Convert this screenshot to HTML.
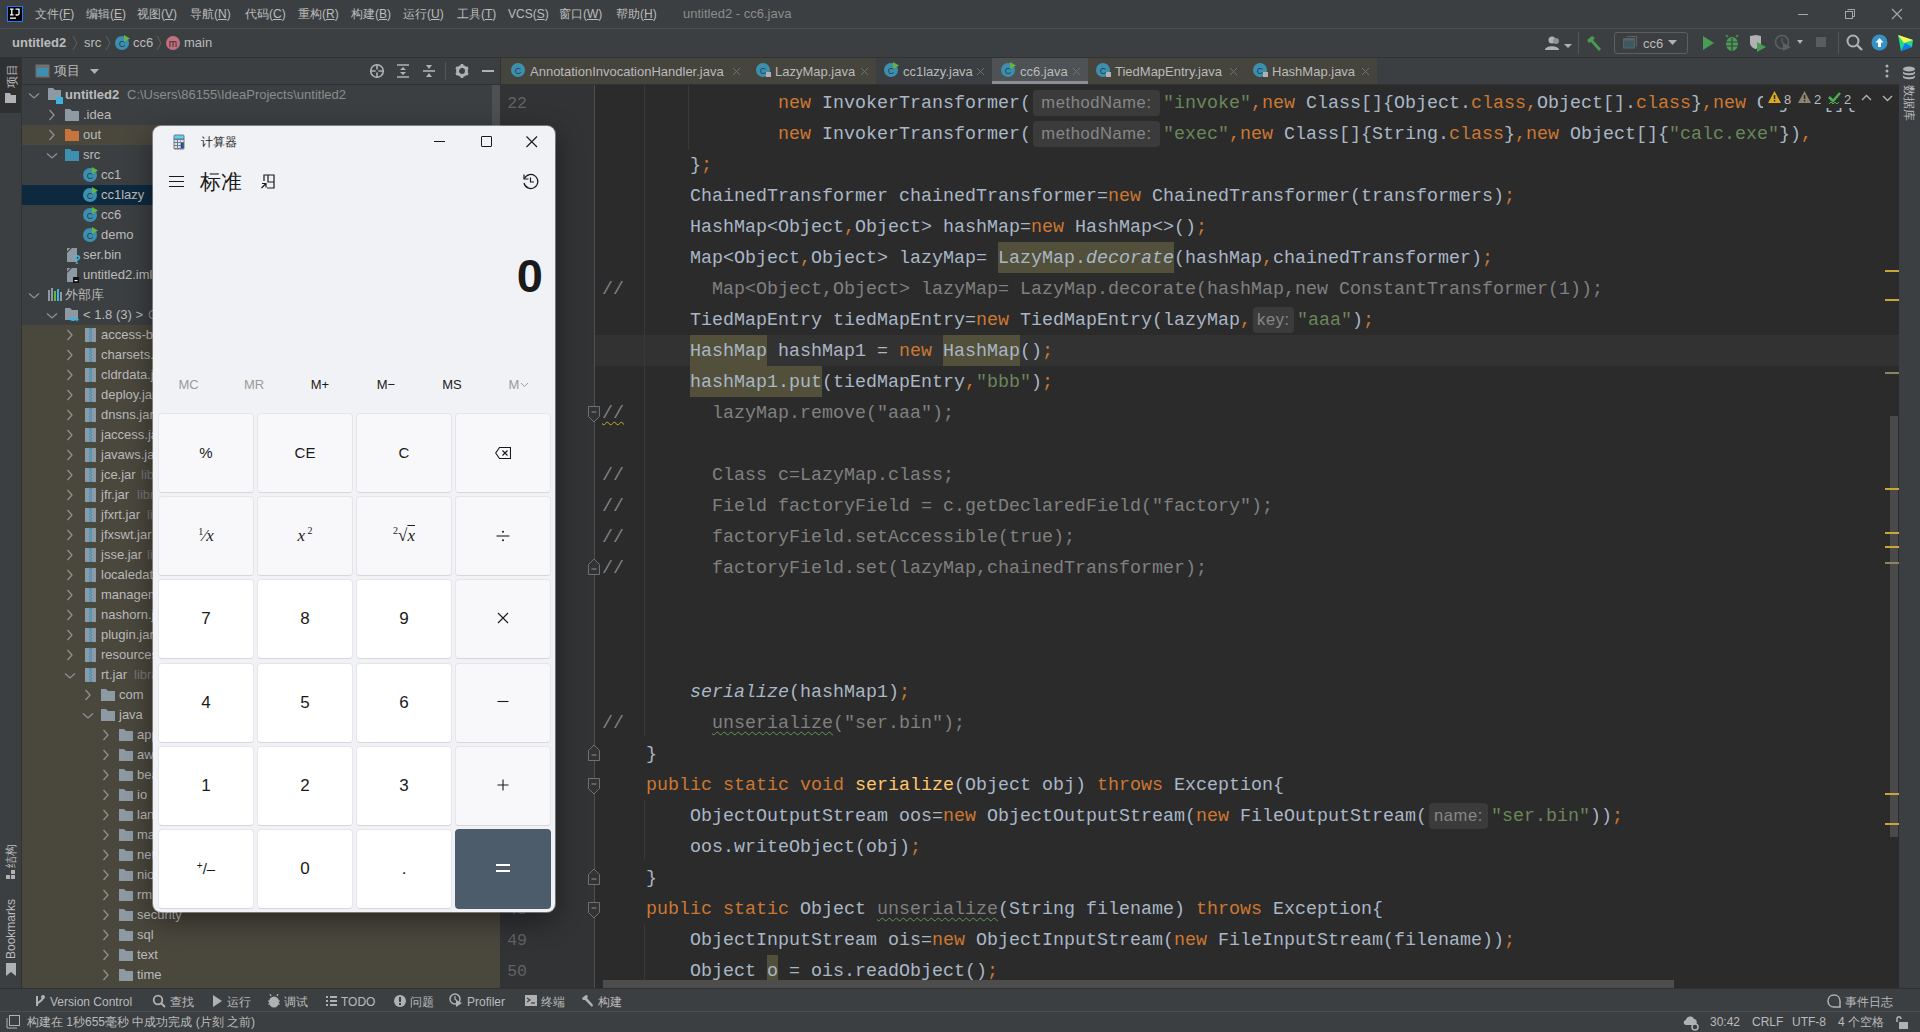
<!DOCTYPE html>
<html><head><meta charset="utf-8"><title>untitled2 - cc6.java</title>
<style>
html,body{margin:0;padding:0;width:1920px;height:1032px;overflow:hidden;background:#3C3F41}
body{position:relative;font-family:'Liberation Sans', sans-serif;-webkit-font-smoothing:antialiased}
sup{line-height:0}
</style></head><body>
<div style="position:absolute;left:0px;top:0px;width:1920px;height:28px;background:#3C3F41;"></div><div style="position:absolute;left:0px;top:28px;width:1920px;height:1px;background:#4B4D4F;"></div><div style="position:absolute;left:0px;top:29px;width:1920px;height:28px;background:#3C3F41;"></div><div style="position:absolute;left:0px;top:57px;width:1920px;height:1px;background:#323232;"></div><svg style="position:absolute;left:7px;top:6px" width="17" height="17"><rect x="0.5" y="0.5" width="15" height="15" fill="#000" stroke="#1E7BFF"/><path d="M3 3.2H6.6M4.8 3.2V8.8M3 8.8H6.6" stroke="#fff" stroke-width="1.3"/><path d="M8.5 3.2H12V7.5C12 9.2 10 9.4 8.6 8.6" stroke="#fff" stroke-width="1.3" fill="none"/><rect x="3" y="11.5" width="6" height="1.3" fill="#fff"/></svg><div style="position:absolute;left:35px;top:8px;font-size:12px;line-height:12px;color:#BBBBBB;white-space:pre;">文件(<u style="text-underline-offset:1px">F</u>)</div><div style="position:absolute;left:86px;top:8px;font-size:12px;line-height:12px;color:#BBBBBB;white-space:pre;">编辑(<u style="text-underline-offset:1px">E</u>)</div><div style="position:absolute;left:137px;top:8px;font-size:12px;line-height:12px;color:#BBBBBB;white-space:pre;">视图(<u style="text-underline-offset:1px">V</u>)</div><div style="position:absolute;left:190px;top:8px;font-size:12px;line-height:12px;color:#BBBBBB;white-space:pre;">导航(<u style="text-underline-offset:1px">N</u>)</div><div style="position:absolute;left:245px;top:8px;font-size:12px;line-height:12px;color:#BBBBBB;white-space:pre;">代码(<u style="text-underline-offset:1px">C</u>)</div><div style="position:absolute;left:298px;top:8px;font-size:12px;line-height:12px;color:#BBBBBB;white-space:pre;">重构(<u style="text-underline-offset:1px">R</u>)</div><div style="position:absolute;left:351px;top:8px;font-size:12px;line-height:12px;color:#BBBBBB;white-space:pre;">构建(<u style="text-underline-offset:1px">B</u>)</div><div style="position:absolute;left:403px;top:8px;font-size:12px;line-height:12px;color:#BBBBBB;white-space:pre;">运行(<u style="text-underline-offset:1px">U</u>)</div><div style="position:absolute;left:457px;top:8px;font-size:12px;line-height:12px;color:#BBBBBB;white-space:pre;">工具(<u style="text-underline-offset:1px">T</u>)</div><div style="position:absolute;left:508px;top:8px;font-size:12px;line-height:12px;color:#BBBBBB;white-space:pre;">VCS(<u style="text-underline-offset:1px">S</u>)</div><div style="position:absolute;left:559px;top:8px;font-size:12px;line-height:12px;color:#BBBBBB;white-space:pre;">窗口(<u style="text-underline-offset:1px">W</u>)</div><div style="position:absolute;left:616px;top:8px;font-size:12px;line-height:12px;color:#BBBBBB;white-space:pre;">帮助(<u style="text-underline-offset:1px">H</u>)</div><div style="position:absolute;left:683px;top:7px;font-size:13px;line-height:13px;color:#8C8C8C;white-space:pre;">untitled2 - cc6.java</div><div style="position:absolute;left:1798px;top:14px;width:10px;height:1px;background:#A8A8A8;"></div><svg style="position:absolute;left:1844px;top:8px" width="12" height="12"><rect x="1.5" y="3.5" width="7" height="7" fill="none" stroke="#A8A8A8"/><path d="M3.5 1.5H10.5V8.5H8.5" fill="none" stroke="#A8A8A8"/></svg><svg style="position:absolute;left:1891px;top:8px" width="12" height="12"><path d="M1 1L11 11M11 1L1 11" stroke="#A8A8A8" stroke-width="1.1"/></svg><div style="position:absolute;left:12px;top:36px;font-size:13px;line-height:13px;color:#BBBBBB;white-space:pre;font-weight:bold">untitled2</div><svg style="position:absolute;left:72px;top:35px" width="6" height="16"><path d="M1 1L5 8L1 15" stroke="#5E6060" stroke-width="1" fill="none"/></svg><div style="position:absolute;left:84px;top:36px;font-size:13px;line-height:13px;color:#BBBBBB;white-space:pre;">src</div><svg style="position:absolute;left:105px;top:35px" width="6" height="16"><path d="M1 1L5 8L1 15" stroke="#5E6060" stroke-width="1" fill="none"/></svg><svg style="position:absolute;left:115px;top:35px" width="16" height="16"><circle cx="7" cy="8" r="7" fill="#3D8FB0"/><text x="7" y="11.5" font-size="9" text-anchor="middle" fill="#1E3E4A" font-family="Liberation Sans">C</text><path d="M9 0L15 3.5L9 7Z" fill="#62B543"/></svg><div style="position:absolute;left:133px;top:36px;font-size:13px;line-height:13px;color:#BBBBBB;white-space:pre;">cc6</div><svg style="position:absolute;left:156px;top:35px" width="6" height="16"><path d="M1 1L5 8L1 15" stroke="#5E6060" stroke-width="1" fill="none"/></svg><svg style="position:absolute;left:165px;top:35px" width="16" height="16"><circle cx="8" cy="8" r="7" fill="#C0717F"/><text x="8" y="11.5" font-size="10" text-anchor="middle" fill="#3C2A2E" font-family="Liberation Sans">m</text></svg><div style="position:absolute;left:184px;top:36px;font-size:13px;line-height:13px;color:#BBBBBB;white-space:pre;">main</div><svg style="position:absolute;left:1544px;top:35px" width="30" height="18"><circle cx="8" cy="5" r="3.5" fill="#AFB1B3"/><path d="M1 15C1 10 15 10 15 15Z" fill="#AFB1B3"/><circle cx="12" cy="6" r="3" fill="#8F9193"/><path d="M20 9L28 9L24 13Z" fill="#AFB1B3"/></svg><div style="position:absolute;left:1578px;top:32px;width:1px;height:22px;background:#555555;"></div><svg style="position:absolute;left:1586px;top:35px" width="18" height="18"><path d="M1 5L6 1L9 3L7 5L15 14L13 16L5 7L3 8Z" fill="#499C54"/></svg><div style="position:absolute;left:1614px;top:32px;width:72px;height:20px;border:1px solid #5E6060;border-radius:3px;"></div><svg style="position:absolute;left:1623px;top:35px" width="16" height="16"><path d="M3.5 1.5H13.5V11.5" fill="none" stroke="#5E6162" stroke-width="1.2"/><rect x="0.5" y="3.5" width="11" height="9.5" fill="#3C5A66" stroke="#5E6162"/><rect x="0.5" y="3.5" width="11" height="2" fill="#5E6162"/></svg><div style="position:absolute;left:1643px;top:37px;font-size:13px;line-height:13px;color:#BBBBBB;white-space:pre;">cc6</div><svg style="position:absolute;left:1668px;top:39px" width="10" height="8"><path d="M0 1L9 1L4.5 6Z" fill="#AFB1B3"/></svg><svg style="position:absolute;left:1701px;top:35px" width="14" height="16"><path d="M2 1L13 8L2 15Z" fill="#499C54"/></svg><svg style="position:absolute;left:1724px;top:34px" width="16" height="18"><ellipse cx="8" cy="10" rx="6" ry="7" fill="#499C54"/><path d="M4 3L2 1M12 3L14 1" stroke="#499C54" stroke-width="1.5"/><path d="M2 8H14M2 12H14M8 4V17" stroke="#3C3F41" stroke-width="1.2"/></svg><svg style="position:absolute;left:1749px;top:34px" width="18" height="18"><path d="M1 2L7 1L12 2V9C12 13 7 15 6 15C4 14 1 12 1 9Z" fill="#AFB1B3"/><path d="M8 8L17 13L8 18Z" fill="#499C54"/></svg><svg style="position:absolute;left:1774px;top:34px" width="30" height="18"><circle cx="8" cy="8" r="6.5" fill="none" stroke="#5E6060" stroke-width="1.5"/><path d="M8 4V8L10 10" stroke="#5E6060" stroke-width="1.2" fill="none"/><path d="M9 9L17 13L9 17Z" fill="#5E6060"/><path d="M23 6L29 6L26 10Z" fill="#AFB1B3"/></svg><div style="position:absolute;left:1816px;top:37px;width:10px;height:10px;background:#5A5D5F;"></div><div style="position:absolute;left:1838px;top:32px;width:1px;height:22px;background:#555555;"></div><svg style="position:absolute;left:1846px;top:34px" width="18" height="18"><circle cx="7" cy="7" r="5.5" fill="none" stroke="#AFB1B3" stroke-width="2"/><path d="M11 11L16 16" stroke="#AFB1B3" stroke-width="2.4"/></svg><svg style="position:absolute;left:1871px;top:34px" width="18" height="18"><circle cx="8.5" cy="8.5" r="8" fill="#3592C4"/><path d="M8.5 4L4.5 8.5H7V13H10V8.5H12.5Z" fill="#fff"/></svg><svg style="position:absolute;left:1897px;top:34px" width="18" height="18"><path d="M1 1L16 6L15 13L4 17Z" fill="#21D789"/><path d="M1 1L16 6L7 9Z" fill="#FCF84A"/><path d="M4 17L15 13L8 9Z" fill="#087CFA"/></svg><div style="position:absolute;left:0px;top:58px;width:21px;height:953px;background:#3C3F41;"></div><div style="position:absolute;left:0px;top:58px;width:21px;height:55px;background:#2E3031;"></div><div style="position:absolute;left:21px;top:58px;width:1px;height:953px;background:#323232;"></div><div style="position:absolute;left:-8px;top:68px;width:40px;height:16px;transform:rotate(-90deg);font-size:12px;line-height:16px;color:#BBBBBB;text-align:center">项目</div><svg style="position:absolute;left:5px;top:92px" width="12" height="12"><path d="M0 1H5L6 3H11V11H0Z" fill="#AFB1B3"/></svg><div style="position:absolute;left:-9px;top:848px;width:40px;height:16px;transform:rotate(-90deg);font-size:12px;line-height:16px;color:#BBBBBB;text-align:center">结构</div><svg style="position:absolute;left:6px;top:870px" width="10" height="10"><rect x="5" y="0" width="4" height="4" fill="#AFB1B3"/><rect x="0" y="5" width="4" height="4" fill="#AFB1B3"/><rect x="5" y="5" width="4" height="4" fill="#AFB1B3"/></svg><div style="position:absolute;left:-26px;top:922px;width:74px;height:14px;transform:rotate(-90deg);font-family:'Liberation Sans', sans-serif;font-size:12px;line-height:14px;color:#BBBBBB;text-align:center">Bookmarks</div><svg style="position:absolute;left:6px;top:963px" width="10" height="14"><path d="M0 0H10V13L5 9L0 13Z" fill="#AFB1B3"/></svg><div style="position:absolute;left:1899px;top:58px;width:21px;height:953px;background:#3C3F41;"></div><div style="position:absolute;left:1898px;top:58px;width:1px;height:953px;background:#323232;"></div><svg style="position:absolute;left:1902px;top:66px" width="14" height="16"><ellipse cx="7" cy="3" rx="6" ry="2.5" fill="#AFB1B3"/><path d="M1 5C1 8 13 8 13 5V7C13 10 1 10 1 7Z" fill="#AFB1B3"/><path d="M1 9C1 12 13 12 13 9V11C13 14 1 14 1 11Z" fill="#AFB1B3"/></svg><div style="position:absolute;left:1889px;top:95px;width:40px;height:16px;transform:rotate(90deg);font-size:12px;line-height:16px;color:#BBBBBB;text-align:center">数据库</div><div style="position:absolute;left:22px;top:58px;width:478px;height:26px;background:#3C3F41;"></div><div style="position:absolute;left:22px;top:84px;width:478px;height:1px;background:#323232;"></div><svg style="position:absolute;left:35px;top:64px" width="16" height="16"><rect x="0.5" y="0.5" width="14" height="13" fill="#6E7072"/><rect x="2" y="4" width="11" height="8" fill="#3D8FB0"/></svg><div style="position:absolute;left:54px;top:64px;font-size:13px;line-height:13px;color:#BBBBBB;white-space:pre;">项目</div><svg style="position:absolute;left:90px;top:68px" width="10" height="8"><path d="M0 1L9 1L4.5 6Z" fill="#AFB1B3"/></svg><svg style="position:absolute;left:369px;top:63px" width="16" height="16"><circle cx="8" cy="8" r="6.3" fill="none" stroke="#AFB1B3" stroke-width="1.6"/><path d="M8 1V6.6M8 9.4V15M1 8H6.6M9.4 8H15" stroke="#AFB1B3" stroke-width="1.6"/></svg><svg style="position:absolute;left:395px;top:63px" width="16" height="16"><path d="M2 2H14M2 14H14" stroke="#AFB1B3" stroke-width="1.6"/><path d="M8 4L11 7H5Z M8 12L11 9H5Z" fill="#AFB1B3"/></svg><svg style="position:absolute;left:421px;top:63px" width="16" height="16"><path d="M2 8H14" stroke="#AFB1B3" stroke-width="1.6"/><path d="M8 6L11 2H5Z M8 10L11 14H5Z" fill="#AFB1B3"/></svg><div style="position:absolute;left:445px;top:62px;width:1px;height:18px;background:#555555;"></div><svg style="position:absolute;left:454px;top:63px" width="16" height="16"><circle cx="8" cy="8" r="4.5" fill="none" stroke="#AFB1B3" stroke-width="3"/><path d="M8 1V4M8 12V15M2 4.5L4.6 6M11.4 10L14 11.5M2 11.5L4.6 10M11.4 6L14 4.5" stroke="#AFB1B3" stroke-width="2.6"/></svg><div style="position:absolute;left:482px;top:70px;width:12px;height:2px;background:#AFB1B3;"></div><div style="position:absolute;left:22px;top:85px;width:478px;height:903px;background:#3C3F41;"></div><div style="position:absolute;left:22px;top:125px;width:478px;height:20px;background:#4A473D;"></div><div style="position:absolute;left:22px;top:185px;width:478px;height:20px;background:#0D293E;"></div><div style="position:absolute;left:22px;top:325px;width:478px;height:663px;background:#4A473D;"></div><div style="position:absolute;left:492px;top:85px;width:8px;height:160px;background:#4E5052;"></div><svg style="position:absolute;left:28px;top:92px" width="12" height="8"><path d="M1 1.5L6 6L11 1.5" stroke="#8E9193" stroke-width="1.3" fill="none"/></svg><svg style="position:absolute;left:47px;top:87px" width="17" height="17"><path d="M1 1H6L8 3H14V13H1Z" fill="#8D9AA3"/><rect x="9" y="10" width="7" height="7" fill="#3DB3E0"/></svg><div style="position:absolute;left:65px;top:87px;font-size:13px;line-height:15px;color:#BBBBBB;white-space:pre;font-weight:bold">untitled2</div><div style="position:absolute;left:127px;top:87px;font-size:13px;line-height:15px;color:#8C8C8C;white-space:pre;">C:\Users\86155\IdeaProjects\untitled2</div><svg style="position:absolute;left:48px;top:109px" width="8" height="12"><path d="M1.5 1L6 6L1.5 11" stroke="#8E9193" stroke-width="1.3" fill="none"/></svg><svg style="position:absolute;left:64px;top:107px" width="16" height="16"><path d="M1 2H6L8 4H15V14H1Z" fill="#8D9AA3"/></svg><div style="position:absolute;left:83px;top:107px;font-size:13px;line-height:15px;color:#BBBBBB;white-space:pre;">.idea</div><svg style="position:absolute;left:48px;top:129px" width="8" height="12"><path d="M1.5 1L6 6L1.5 11" stroke="#8E9193" stroke-width="1.3" fill="none"/></svg><svg style="position:absolute;left:64px;top:127px" width="16" height="16"><path d="M1 2H6L8 4H15V14H1Z" fill="#C7733F"/></svg><div style="position:absolute;left:83px;top:127px;font-size:13px;line-height:15px;color:#BBBBBB;white-space:pre;">out</div><svg style="position:absolute;left:46px;top:152px" width="12" height="8"><path d="M1 1.5L6 6L11 1.5" stroke="#8E9193" stroke-width="1.3" fill="none"/></svg><svg style="position:absolute;left:64px;top:147px" width="16" height="16"><path d="M1 2H6L8 4H15V14H1Z" fill="#3D8FB0"/></svg><div style="position:absolute;left:83px;top:147px;font-size:13px;line-height:15px;color:#BBBBBB;white-space:pre;">src</div><svg style="position:absolute;left:83px;top:167px" width="16" height="16"><circle cx="7" cy="8" r="7" fill="#3D8FB0"/><text x="7" y="11.5" font-size="9" text-anchor="middle" fill="#1E3E4A" font-family="Liberation Sans">C</text><path d="M9 0L15 3.5L9 7Z" fill="#62B543"/></svg><div style="position:absolute;left:101px;top:167px;font-size:13px;line-height:15px;color:#BBBBBB;white-space:pre;">cc1</div><svg style="position:absolute;left:83px;top:187px" width="16" height="16"><circle cx="7" cy="8" r="7" fill="#3D8FB0"/><text x="7" y="11.5" font-size="9" text-anchor="middle" fill="#1E3E4A" font-family="Liberation Sans">C</text><path d="M9 0L15 3.5L9 7Z" fill="#62B543"/></svg><div style="position:absolute;left:101px;top:187px;font-size:13px;line-height:15px;color:#BBBBBB;white-space:pre;">cc1lazy</div><svg style="position:absolute;left:83px;top:207px" width="16" height="16"><circle cx="7" cy="8" r="7" fill="#3D8FB0"/><text x="7" y="11.5" font-size="9" text-anchor="middle" fill="#1E3E4A" font-family="Liberation Sans">C</text><path d="M9 0L15 3.5L9 7Z" fill="#62B543"/></svg><div style="position:absolute;left:101px;top:207px;font-size:13px;line-height:15px;color:#BBBBBB;white-space:pre;">cc6</div><svg style="position:absolute;left:83px;top:227px" width="16" height="16"><circle cx="7" cy="8" r="7" fill="#3D8FB0"/><text x="7" y="11.5" font-size="9" text-anchor="middle" fill="#1E3E4A" font-family="Liberation Sans">C</text><path d="M9 0L15 3.5L9 7Z" fill="#62B543"/></svg><div style="position:absolute;left:101px;top:227px;font-size:13px;line-height:15px;color:#BBBBBB;white-space:pre;">demo</div><svg style="position:absolute;left:66px;top:247px" width="17" height="18"><path d="M1 1H4.5L1 4.5Z" fill="#8D9AA3"/><path d="M6 1H11V15H1V6Z" fill="#8D9AA3"/><text x="7.5" y="17" font-size="12" font-weight="bold" fill="#3DB3E0" font-family="Liberation Sans">?</text></svg><div style="position:absolute;left:83px;top:247px;font-size:13px;line-height:15px;color:#BBBBBB;white-space:pre;">ser.bin</div><svg style="position:absolute;left:66px;top:267px" width="17" height="18"><path d="M1 1H4.5L1 4.5Z" fill="#8D9AA3"/><path d="M6 1H11V15H1V6Z" fill="#8D9AA3"/><rect x="7" y="10" width="6" height="6" fill="#111"/><rect x="8.5" y="13" width="3" height="1.2" fill="#fff"/></svg><div style="position:absolute;left:83px;top:267px;font-size:13px;line-height:15px;color:#BBBBBB;white-space:pre;">untitled2.iml</div><svg style="position:absolute;left:28px;top:292px" width="12" height="8"><path d="M1 1.5L6 6L11 1.5" stroke="#8E9193" stroke-width="1.3" fill="none"/></svg><svg style="position:absolute;left:47px;top:287px" width="16" height="16"><rect x="1" y="3" width="2" height="11" fill="#8D9AA3"/><rect x="4" y="1" width="2" height="13" fill="#8D9AA3"/><rect x="7" y="4" width="2" height="10" fill="#62B543"/><rect x="10" y="2" width="2" height="12" fill="#3DB3E0"/><rect x="13" y="5" width="2" height="9" fill="#8D9AA3"/></svg><div style="position:absolute;left:65px;top:287px;font-size:13px;line-height:15px;color:#BBBBBB;white-space:pre;">外部库</div><svg style="position:absolute;left:46px;top:312px" width="12" height="8"><path d="M1 1.5L6 6L11 1.5" stroke="#8E9193" stroke-width="1.3" fill="none"/></svg><svg style="position:absolute;left:64px;top:307px" width="17" height="16"><path d="M1 1H6L8 3H14V13H1Z" fill="#8D9AA3"/><path d="M5 11H13C13 15 5 15 5 11Z" fill="#3DB3E0"/><path d="M13 12C15 11 15 14 12 14" stroke="#3DB3E0" fill="none"/></svg><div style="position:absolute;left:83px;top:307px;font-size:13px;line-height:15px;color:#BBBBBB;white-space:pre;">&lt; 1.8 (3) &gt;</div><div style="position:absolute;left:148px;top:307px;font-size:13px;line-height:15px;color:#8C8C8C;white-space:pre;">C:\Program Files\Java\jdk1.8.0_65</div><svg style="position:absolute;left:66px;top:329px" width="8" height="12"><path d="M1.5 1L6 6L1.5 11" stroke="#8E9193" stroke-width="1.3" fill="none"/></svg><svg style="position:absolute;left:84px;top:327px" width="14" height="16"><rect x="1" y="1" width="11" height="14" fill="#8D9AA3"/><rect x="5" y="1" width="3" height="14" fill="#3592C4"/><path d="M5 2L8 3.5L5 5L8 6.5L5 8L8 9.5L5 11L8 12.5L5 14" stroke="#8D9AA3" stroke-width="0.8" fill="none"/></svg><div style="position:absolute;left:101px;top:327px;font-size:13px;line-height:15px;color:#BBBBBB;white-space:pre;">access-bridge-64.jar</div><svg style="position:absolute;left:66px;top:349px" width="8" height="12"><path d="M1.5 1L6 6L1.5 11" stroke="#8E9193" stroke-width="1.3" fill="none"/></svg><svg style="position:absolute;left:84px;top:347px" width="14" height="16"><rect x="1" y="1" width="11" height="14" fill="#8D9AA3"/><rect x="5" y="1" width="3" height="14" fill="#3592C4"/><path d="M5 2L8 3.5L5 5L8 6.5L5 8L8 9.5L5 11L8 12.5L5 14" stroke="#8D9AA3" stroke-width="0.8" fill="none"/></svg><div style="position:absolute;left:101px;top:347px;font-size:13px;line-height:15px;color:#BBBBBB;white-space:pre;">charsets.jar</div><svg style="position:absolute;left:66px;top:369px" width="8" height="12"><path d="M1.5 1L6 6L1.5 11" stroke="#8E9193" stroke-width="1.3" fill="none"/></svg><svg style="position:absolute;left:84px;top:367px" width="14" height="16"><rect x="1" y="1" width="11" height="14" fill="#8D9AA3"/><rect x="5" y="1" width="3" height="14" fill="#3592C4"/><path d="M5 2L8 3.5L5 5L8 6.5L5 8L8 9.5L5 11L8 12.5L5 14" stroke="#8D9AA3" stroke-width="0.8" fill="none"/></svg><div style="position:absolute;left:101px;top:367px;font-size:13px;line-height:15px;color:#BBBBBB;white-space:pre;">cldrdata.jar</div><svg style="position:absolute;left:66px;top:389px" width="8" height="12"><path d="M1.5 1L6 6L1.5 11" stroke="#8E9193" stroke-width="1.3" fill="none"/></svg><svg style="position:absolute;left:84px;top:387px" width="14" height="16"><rect x="1" y="1" width="11" height="14" fill="#8D9AA3"/><rect x="5" y="1" width="3" height="14" fill="#3592C4"/><path d="M5 2L8 3.5L5 5L8 6.5L5 8L8 9.5L5 11L8 12.5L5 14" stroke="#8D9AA3" stroke-width="0.8" fill="none"/></svg><div style="position:absolute;left:101px;top:387px;font-size:13px;line-height:15px;color:#BBBBBB;white-space:pre;">deploy.jar</div><svg style="position:absolute;left:66px;top:409px" width="8" height="12"><path d="M1.5 1L6 6L1.5 11" stroke="#8E9193" stroke-width="1.3" fill="none"/></svg><svg style="position:absolute;left:84px;top:407px" width="14" height="16"><rect x="1" y="1" width="11" height="14" fill="#8D9AA3"/><rect x="5" y="1" width="3" height="14" fill="#3592C4"/><path d="M5 2L8 3.5L5 5L8 6.5L5 8L8 9.5L5 11L8 12.5L5 14" stroke="#8D9AA3" stroke-width="0.8" fill="none"/></svg><div style="position:absolute;left:101px;top:407px;font-size:13px;line-height:15px;color:#BBBBBB;white-space:pre;">dnsns.jar</div><svg style="position:absolute;left:66px;top:429px" width="8" height="12"><path d="M1.5 1L6 6L1.5 11" stroke="#8E9193" stroke-width="1.3" fill="none"/></svg><svg style="position:absolute;left:84px;top:427px" width="14" height="16"><rect x="1" y="1" width="11" height="14" fill="#8D9AA3"/><rect x="5" y="1" width="3" height="14" fill="#3592C4"/><path d="M5 2L8 3.5L5 5L8 6.5L5 8L8 9.5L5 11L8 12.5L5 14" stroke="#8D9AA3" stroke-width="0.8" fill="none"/></svg><div style="position:absolute;left:101px;top:427px;font-size:13px;line-height:15px;color:#BBBBBB;white-space:pre;">jaccess.jar</div><svg style="position:absolute;left:66px;top:449px" width="8" height="12"><path d="M1.5 1L6 6L1.5 11" stroke="#8E9193" stroke-width="1.3" fill="none"/></svg><svg style="position:absolute;left:84px;top:447px" width="14" height="16"><rect x="1" y="1" width="11" height="14" fill="#8D9AA3"/><rect x="5" y="1" width="3" height="14" fill="#3592C4"/><path d="M5 2L8 3.5L5 5L8 6.5L5 8L8 9.5L5 11L8 12.5L5 14" stroke="#8D9AA3" stroke-width="0.8" fill="none"/></svg><div style="position:absolute;left:101px;top:447px;font-size:13px;line-height:15px;color:#BBBBBB;white-space:pre;">javaws.jar</div><svg style="position:absolute;left:66px;top:469px" width="8" height="12"><path d="M1.5 1L6 6L1.5 11" stroke="#8E9193" stroke-width="1.3" fill="none"/></svg><svg style="position:absolute;left:84px;top:467px" width="14" height="16"><rect x="1" y="1" width="11" height="14" fill="#8D9AA3"/><rect x="5" y="1" width="3" height="14" fill="#3592C4"/><path d="M5 2L8 3.5L5 5L8 6.5L5 8L8 9.5L5 11L8 12.5L5 14" stroke="#8D9AA3" stroke-width="0.8" fill="none"/></svg><div style="position:absolute;left:101px;top:467px;font-size:13px;line-height:15px;color:#BBBBBB;white-space:pre;">jce.jar</div><svg style="position:absolute;left:66px;top:489px" width="8" height="12"><path d="M1.5 1L6 6L1.5 11" stroke="#8E9193" stroke-width="1.3" fill="none"/></svg><svg style="position:absolute;left:84px;top:487px" width="14" height="16"><rect x="1" y="1" width="11" height="14" fill="#8D9AA3"/><rect x="5" y="1" width="3" height="14" fill="#3592C4"/><path d="M5 2L8 3.5L5 5L8 6.5L5 8L8 9.5L5 11L8 12.5L5 14" stroke="#8D9AA3" stroke-width="0.8" fill="none"/></svg><div style="position:absolute;left:101px;top:487px;font-size:13px;line-height:15px;color:#BBBBBB;white-space:pre;">jfr.jar</div><svg style="position:absolute;left:66px;top:509px" width="8" height="12"><path d="M1.5 1L6 6L1.5 11" stroke="#8E9193" stroke-width="1.3" fill="none"/></svg><svg style="position:absolute;left:84px;top:507px" width="14" height="16"><rect x="1" y="1" width="11" height="14" fill="#8D9AA3"/><rect x="5" y="1" width="3" height="14" fill="#3592C4"/><path d="M5 2L8 3.5L5 5L8 6.5L5 8L8 9.5L5 11L8 12.5L5 14" stroke="#8D9AA3" stroke-width="0.8" fill="none"/></svg><div style="position:absolute;left:101px;top:507px;font-size:13px;line-height:15px;color:#BBBBBB;white-space:pre;">jfxrt.jar</div><svg style="position:absolute;left:66px;top:529px" width="8" height="12"><path d="M1.5 1L6 6L1.5 11" stroke="#8E9193" stroke-width="1.3" fill="none"/></svg><svg style="position:absolute;left:84px;top:527px" width="14" height="16"><rect x="1" y="1" width="11" height="14" fill="#8D9AA3"/><rect x="5" y="1" width="3" height="14" fill="#3592C4"/><path d="M5 2L8 3.5L5 5L8 6.5L5 8L8 9.5L5 11L8 12.5L5 14" stroke="#8D9AA3" stroke-width="0.8" fill="none"/></svg><div style="position:absolute;left:101px;top:527px;font-size:13px;line-height:15px;color:#BBBBBB;white-space:pre;">jfxswt.jar</div><svg style="position:absolute;left:66px;top:549px" width="8" height="12"><path d="M1.5 1L6 6L1.5 11" stroke="#8E9193" stroke-width="1.3" fill="none"/></svg><svg style="position:absolute;left:84px;top:547px" width="14" height="16"><rect x="1" y="1" width="11" height="14" fill="#8D9AA3"/><rect x="5" y="1" width="3" height="14" fill="#3592C4"/><path d="M5 2L8 3.5L5 5L8 6.5L5 8L8 9.5L5 11L8 12.5L5 14" stroke="#8D9AA3" stroke-width="0.8" fill="none"/></svg><div style="position:absolute;left:101px;top:547px;font-size:13px;line-height:15px;color:#BBBBBB;white-space:pre;">jsse.jar</div><svg style="position:absolute;left:66px;top:569px" width="8" height="12"><path d="M1.5 1L6 6L1.5 11" stroke="#8E9193" stroke-width="1.3" fill="none"/></svg><svg style="position:absolute;left:84px;top:567px" width="14" height="16"><rect x="1" y="1" width="11" height="14" fill="#8D9AA3"/><rect x="5" y="1" width="3" height="14" fill="#3592C4"/><path d="M5 2L8 3.5L5 5L8 6.5L5 8L8 9.5L5 11L8 12.5L5 14" stroke="#8D9AA3" stroke-width="0.8" fill="none"/></svg><div style="position:absolute;left:101px;top:567px;font-size:13px;line-height:15px;color:#BBBBBB;white-space:pre;">localedata.jar</div><svg style="position:absolute;left:66px;top:589px" width="8" height="12"><path d="M1.5 1L6 6L1.5 11" stroke="#8E9193" stroke-width="1.3" fill="none"/></svg><svg style="position:absolute;left:84px;top:587px" width="14" height="16"><rect x="1" y="1" width="11" height="14" fill="#8D9AA3"/><rect x="5" y="1" width="3" height="14" fill="#3592C4"/><path d="M5 2L8 3.5L5 5L8 6.5L5 8L8 9.5L5 11L8 12.5L5 14" stroke="#8D9AA3" stroke-width="0.8" fill="none"/></svg><div style="position:absolute;left:101px;top:587px;font-size:13px;line-height:15px;color:#BBBBBB;white-space:pre;">management-agent.jar</div><svg style="position:absolute;left:66px;top:609px" width="8" height="12"><path d="M1.5 1L6 6L1.5 11" stroke="#8E9193" stroke-width="1.3" fill="none"/></svg><svg style="position:absolute;left:84px;top:607px" width="14" height="16"><rect x="1" y="1" width="11" height="14" fill="#8D9AA3"/><rect x="5" y="1" width="3" height="14" fill="#3592C4"/><path d="M5 2L8 3.5L5 5L8 6.5L5 8L8 9.5L5 11L8 12.5L5 14" stroke="#8D9AA3" stroke-width="0.8" fill="none"/></svg><div style="position:absolute;left:101px;top:607px;font-size:13px;line-height:15px;color:#BBBBBB;white-space:pre;">nashorn.jar</div><svg style="position:absolute;left:66px;top:629px" width="8" height="12"><path d="M1.5 1L6 6L1.5 11" stroke="#8E9193" stroke-width="1.3" fill="none"/></svg><svg style="position:absolute;left:84px;top:627px" width="14" height="16"><rect x="1" y="1" width="11" height="14" fill="#8D9AA3"/><rect x="5" y="1" width="3" height="14" fill="#3592C4"/><path d="M5 2L8 3.5L5 5L8 6.5L5 8L8 9.5L5 11L8 12.5L5 14" stroke="#8D9AA3" stroke-width="0.8" fill="none"/></svg><div style="position:absolute;left:101px;top:627px;font-size:13px;line-height:15px;color:#BBBBBB;white-space:pre;">plugin.jar</div><svg style="position:absolute;left:66px;top:649px" width="8" height="12"><path d="M1.5 1L6 6L1.5 11" stroke="#8E9193" stroke-width="1.3" fill="none"/></svg><svg style="position:absolute;left:84px;top:647px" width="14" height="16"><rect x="1" y="1" width="11" height="14" fill="#8D9AA3"/><rect x="5" y="1" width="3" height="14" fill="#3592C4"/><path d="M5 2L8 3.5L5 5L8 6.5L5 8L8 9.5L5 11L8 12.5L5 14" stroke="#8D9AA3" stroke-width="0.8" fill="none"/></svg><div style="position:absolute;left:101px;top:647px;font-size:13px;line-height:15px;color:#BBBBBB;white-space:pre;">resources.jar</div><div style="position:absolute;left:141px;top:467px;font-size:13px;line-height:15px;color:#787878;white-space:pre;">library root</div><div style="position:absolute;left:137px;top:487px;font-size:13px;line-height:15px;color:#787878;white-space:pre;">library root</div><div style="position:absolute;left:147px;top:507px;font-size:13px;line-height:15px;color:#787878;white-space:pre;">library root</div><div style="position:absolute;left:155px;top:527px;font-size:13px;line-height:15px;color:#787878;white-space:pre;">library root</div><div style="position:absolute;left:147px;top:547px;font-size:13px;line-height:15px;color:#787878;white-space:pre;">library root</div><svg style="position:absolute;left:64px;top:672px" width="12" height="8"><path d="M1 1.5L6 6L11 1.5" stroke="#8E9193" stroke-width="1.3" fill="none"/></svg><svg style="position:absolute;left:84px;top:667px" width="14" height="16"><rect x="1" y="1" width="11" height="14" fill="#8D9AA3"/><rect x="5" y="1" width="3" height="14" fill="#3592C4"/><path d="M5 2L8 3.5L5 5L8 6.5L5 8L8 9.5L5 11L8 12.5L5 14" stroke="#8D9AA3" stroke-width="0.8" fill="none"/></svg><div style="position:absolute;left:101px;top:667px;font-size:13px;line-height:15px;color:#BBBBBB;white-space:pre;">rt.jar</div><div style="position:absolute;left:134px;top:667px;font-size:13px;line-height:15px;color:#787878;white-space:pre;">library root</div><svg style="position:absolute;left:84px;top:689px" width="8" height="12"><path d="M1.5 1L6 6L1.5 11" stroke="#8E9193" stroke-width="1.3" fill="none"/></svg><svg style="position:absolute;left:100px;top:687px" width="16" height="16"><path d="M1 2H6L8 4H15V14H1Z" fill="#8D9AA3"/></svg><div style="position:absolute;left:119px;top:687px;font-size:13px;line-height:15px;color:#BBBBBB;white-space:pre;">com</div><svg style="position:absolute;left:82px;top:712px" width="12" height="8"><path d="M1 1.5L6 6L11 1.5" stroke="#8E9193" stroke-width="1.3" fill="none"/></svg><svg style="position:absolute;left:100px;top:707px" width="16" height="16"><path d="M1 2H6L8 4H15V14H1Z" fill="#8D9AA3"/></svg><div style="position:absolute;left:119px;top:707px;font-size:13px;line-height:15px;color:#BBBBBB;white-space:pre;">java</div><svg style="position:absolute;left:102px;top:729px" width="8" height="12"><path d="M1.5 1L6 6L1.5 11" stroke="#8E9193" stroke-width="1.3" fill="none"/></svg><svg style="position:absolute;left:118px;top:727px" width="16" height="16"><path d="M1 2H6L8 4H15V14H1Z" fill="#8D9AA3"/></svg><div style="position:absolute;left:137px;top:727px;font-size:13px;line-height:15px;color:#BBBBBB;white-space:pre;">applet</div><svg style="position:absolute;left:102px;top:749px" width="8" height="12"><path d="M1.5 1L6 6L1.5 11" stroke="#8E9193" stroke-width="1.3" fill="none"/></svg><svg style="position:absolute;left:118px;top:747px" width="16" height="16"><path d="M1 2H6L8 4H15V14H1Z" fill="#8D9AA3"/></svg><div style="position:absolute;left:137px;top:747px;font-size:13px;line-height:15px;color:#BBBBBB;white-space:pre;">awt</div><svg style="position:absolute;left:102px;top:769px" width="8" height="12"><path d="M1.5 1L6 6L1.5 11" stroke="#8E9193" stroke-width="1.3" fill="none"/></svg><svg style="position:absolute;left:118px;top:767px" width="16" height="16"><path d="M1 2H6L8 4H15V14H1Z" fill="#8D9AA3"/></svg><div style="position:absolute;left:137px;top:767px;font-size:13px;line-height:15px;color:#BBBBBB;white-space:pre;">beans</div><svg style="position:absolute;left:102px;top:789px" width="8" height="12"><path d="M1.5 1L6 6L1.5 11" stroke="#8E9193" stroke-width="1.3" fill="none"/></svg><svg style="position:absolute;left:118px;top:787px" width="16" height="16"><path d="M1 2H6L8 4H15V14H1Z" fill="#8D9AA3"/></svg><div style="position:absolute;left:137px;top:787px;font-size:13px;line-height:15px;color:#BBBBBB;white-space:pre;">io</div><svg style="position:absolute;left:102px;top:809px" width="8" height="12"><path d="M1.5 1L6 6L1.5 11" stroke="#8E9193" stroke-width="1.3" fill="none"/></svg><svg style="position:absolute;left:118px;top:807px" width="16" height="16"><path d="M1 2H6L8 4H15V14H1Z" fill="#8D9AA3"/></svg><div style="position:absolute;left:137px;top:807px;font-size:13px;line-height:15px;color:#BBBBBB;white-space:pre;">lang</div><svg style="position:absolute;left:102px;top:829px" width="8" height="12"><path d="M1.5 1L6 6L1.5 11" stroke="#8E9193" stroke-width="1.3" fill="none"/></svg><svg style="position:absolute;left:118px;top:827px" width="16" height="16"><path d="M1 2H6L8 4H15V14H1Z" fill="#8D9AA3"/></svg><div style="position:absolute;left:137px;top:827px;font-size:13px;line-height:15px;color:#BBBBBB;white-space:pre;">math</div><svg style="position:absolute;left:102px;top:849px" width="8" height="12"><path d="M1.5 1L6 6L1.5 11" stroke="#8E9193" stroke-width="1.3" fill="none"/></svg><svg style="position:absolute;left:118px;top:847px" width="16" height="16"><path d="M1 2H6L8 4H15V14H1Z" fill="#8D9AA3"/></svg><div style="position:absolute;left:137px;top:847px;font-size:13px;line-height:15px;color:#BBBBBB;white-space:pre;">net</div><svg style="position:absolute;left:102px;top:869px" width="8" height="12"><path d="M1.5 1L6 6L1.5 11" stroke="#8E9193" stroke-width="1.3" fill="none"/></svg><svg style="position:absolute;left:118px;top:867px" width="16" height="16"><path d="M1 2H6L8 4H15V14H1Z" fill="#8D9AA3"/></svg><div style="position:absolute;left:137px;top:867px;font-size:13px;line-height:15px;color:#BBBBBB;white-space:pre;">nio</div><svg style="position:absolute;left:102px;top:889px" width="8" height="12"><path d="M1.5 1L6 6L1.5 11" stroke="#8E9193" stroke-width="1.3" fill="none"/></svg><svg style="position:absolute;left:118px;top:887px" width="16" height="16"><path d="M1 2H6L8 4H15V14H1Z" fill="#8D9AA3"/></svg><div style="position:absolute;left:137px;top:887px;font-size:13px;line-height:15px;color:#BBBBBB;white-space:pre;">rmi</div><svg style="position:absolute;left:102px;top:909px" width="8" height="12"><path d="M1.5 1L6 6L1.5 11" stroke="#8E9193" stroke-width="1.3" fill="none"/></svg><svg style="position:absolute;left:118px;top:907px" width="16" height="16"><path d="M1 2H6L8 4H15V14H1Z" fill="#8D9AA3"/></svg><div style="position:absolute;left:137px;top:907px;font-size:13px;line-height:15px;color:#BBBBBB;white-space:pre;">security</div><svg style="position:absolute;left:102px;top:929px" width="8" height="12"><path d="M1.5 1L6 6L1.5 11" stroke="#8E9193" stroke-width="1.3" fill="none"/></svg><svg style="position:absolute;left:118px;top:927px" width="16" height="16"><path d="M1 2H6L8 4H15V14H1Z" fill="#8D9AA3"/></svg><div style="position:absolute;left:137px;top:927px;font-size:13px;line-height:15px;color:#BBBBBB;white-space:pre;">sql</div><svg style="position:absolute;left:102px;top:949px" width="8" height="12"><path d="M1.5 1L6 6L1.5 11" stroke="#8E9193" stroke-width="1.3" fill="none"/></svg><svg style="position:absolute;left:118px;top:947px" width="16" height="16"><path d="M1 2H6L8 4H15V14H1Z" fill="#8D9AA3"/></svg><div style="position:absolute;left:137px;top:947px;font-size:13px;line-height:15px;color:#BBBBBB;white-space:pre;">text</div><svg style="position:absolute;left:102px;top:969px" width="8" height="12"><path d="M1.5 1L6 6L1.5 11" stroke="#8E9193" stroke-width="1.3" fill="none"/></svg><svg style="position:absolute;left:118px;top:967px" width="16" height="16"><path d="M1 2H6L8 4H15V14H1Z" fill="#8D9AA3"/></svg><div style="position:absolute;left:137px;top:967px;font-size:13px;line-height:15px;color:#BBBBBB;white-space:pre;">time</div><div style="position:absolute;left:500px;top:58px;width:1399px;height:26px;background:#3C3F41;"></div><div style="position:absolute;left:500px;top:84px;width:1399px;height:1px;background:#323232;"></div><div style="position:absolute;left:500px;top:58px;width:1px;height:26px;background:#323232;"></div><div style="position:absolute;left:501px;top:58px;width:375px;height:26px;background:#45443D;"></div><div style="position:absolute;left:992px;top:58px;width:96px;height:26px;background:#4E5254;"></div><div style="position:absolute;left:992px;top:81px;width:96px;height:3px;background:#8C8F93;"></div><div style="position:absolute;left:1088px;top:58px;width:289px;height:26px;background:#45443D;"></div><svg style="position:absolute;left:511px;top:62px" width="16" height="16"><circle cx="7" cy="8" r="7" fill="#3D8FB0"/><text x="7" y="11.5" font-size="9" text-anchor="middle" fill="#1E3E4A" font-family="Liberation Sans">C</text></svg><div style="position:absolute;left:530px;top:65px;font-size:13px;line-height:13px;color:#BBBBBB;white-space:pre;">AnnotationInvocationHandler.java</div><svg style="position:absolute;left:732px;top:67px" width="9" height="9"><path d="M1 1L8 8M8 1L1 8" stroke="#6E7072" stroke-width="1"/></svg><svg style="position:absolute;left:756px;top:62px" width="16" height="16"><circle cx="7" cy="8" r="7" fill="#3D8FB0"/><text x="7" y="11.5" font-size="9" text-anchor="middle" fill="#1E3E4A" font-family="Liberation Sans">C</text><rect x="10" y="10" width="5" height="5" fill="#AFB1B3"/></svg><div style="position:absolute;left:775px;top:65px;font-size:13px;line-height:13px;color:#BBBBBB;white-space:pre;">LazyMap.java</div><svg style="position:absolute;left:860px;top:67px" width="9" height="9"><path d="M1 1L8 8M8 1L1 8" stroke="#6E7072" stroke-width="1"/></svg><svg style="position:absolute;left:884px;top:62px" width="16" height="16"><circle cx="7" cy="8" r="7" fill="#3D8FB0"/><text x="7" y="11.5" font-size="9" text-anchor="middle" fill="#1E3E4A" font-family="Liberation Sans">C</text><path d="M9 0L15 3.5L9 7Z" fill="#62B543"/></svg><div style="position:absolute;left:903px;top:65px;font-size:13px;line-height:13px;color:#BBBBBB;white-space:pre;">cc1lazy.java</div><svg style="position:absolute;left:976px;top:67px" width="9" height="9"><path d="M1 1L8 8M8 1L1 8" stroke="#6E7072" stroke-width="1"/></svg><svg style="position:absolute;left:1001px;top:62px" width="16" height="16"><circle cx="7" cy="8" r="7" fill="#3D8FB0"/><text x="7" y="11.5" font-size="9" text-anchor="middle" fill="#1E3E4A" font-family="Liberation Sans">C</text><path d="M9 0L15 3.5L9 7Z" fill="#62B543"/></svg><div style="position:absolute;left:1020px;top:65px;font-size:13px;line-height:13px;color:#BBBBBB;white-space:pre;">cc6.java</div><svg style="position:absolute;left:1072px;top:67px" width="9" height="9"><path d="M1 1L8 8M8 1L1 8" stroke="#6E7072" stroke-width="1"/></svg><svg style="position:absolute;left:1096px;top:62px" width="16" height="16"><circle cx="7" cy="8" r="7" fill="#3D8FB0"/><text x="7" y="11.5" font-size="9" text-anchor="middle" fill="#1E3E4A" font-family="Liberation Sans">C</text><rect x="10" y="10" width="5" height="5" fill="#AFB1B3"/></svg><div style="position:absolute;left:1115px;top:65px;font-size:13px;line-height:13px;color:#BBBBBB;white-space:pre;">TiedMapEntry.java</div><svg style="position:absolute;left:1229px;top:67px" width="9" height="9"><path d="M1 1L8 8M8 1L1 8" stroke="#6E7072" stroke-width="1"/></svg><svg style="position:absolute;left:1253px;top:62px" width="16" height="16"><circle cx="7" cy="8" r="7" fill="#3D8FB0"/><text x="7" y="11.5" font-size="9" text-anchor="middle" fill="#1E3E4A" font-family="Liberation Sans">C</text><rect x="10" y="10" width="5" height="5" fill="#AFB1B3"/></svg><div style="position:absolute;left:1272px;top:65px;font-size:13px;line-height:13px;color:#BBBBBB;white-space:pre;">HashMap.java</div><svg style="position:absolute;left:1361px;top:67px" width="9" height="9"><path d="M1 1L8 8M8 1L1 8" stroke="#6E7072" stroke-width="1"/></svg><svg style="position:absolute;left:1884px;top:63px" width="6" height="16"><circle cx="3" cy="3" r="1.5" fill="#AFB1B3"/><circle cx="3" cy="8" r="1.5" fill="#AFB1B3"/><circle cx="3" cy="13" r="1.5" fill="#AFB1B3"/></svg><div style="position:absolute;left:500px;top:85px;width:95px;height:903px;background:#313335;"></div><div style="position:absolute;left:595px;top:85px;width:1304px;height:903px;background:#2B2B2B;"></div><div style="position:absolute;left:594px;top:85px;width:1px;height:903px;background:#4E5052;"></div><div style="position:absolute;left:595px;top:335px;width:1304px;height:31px;background:#323232;"></div><div style="position:absolute;left:595px;top:85px;width:1304px;height:903px;overflow:hidden"><div style="position:absolute;left:7px;top:3px;height:31px;font-family:'Liberation Mono', monospace;font-size:18.33px;line-height:31px;white-space:pre"><span style="color:#A9B7C6">                </span><span style="color:#CC7832">new</span><span style="color:#A9B7C6"> InvokerTransformer(</span><span style="display:inline-block;position:relative;width:132px;height:31px;vertical-align:top"><span style="position:absolute;left:2px;top:2px;width:127px;height:26px;background:#3B3B3B;border-radius:4px;font-family:'Liberation Sans', sans-serif;font-size:16.5px;line-height:24px;color:#878787;text-align:center;letter-spacing:0.6px">methodName:</span></span><span style="color:#6A8759">&quot;invoke&quot;</span><span style="color:#CC7832">,new</span><span style="color:#A9B7C6"> Class[]{Object.</span><span style="color:#CC7832">class</span><span style="color:#CC7832">,</span><span style="color:#A9B7C6">Object[].</span><span style="color:#CC7832">class</span><span style="color:#A9B7C6">}</span><span style="color:#CC7832">,new</span><span style="color:#A9B7C6"> Object[]{</span><span style="color:#CC7832">null,null</span><span style="color:#A9B7C6">}),</span></div><div style="position:absolute;left:7px;top:34px;height:31px;font-family:'Liberation Mono', monospace;font-size:18.33px;line-height:31px;white-space:pre"><span style="color:#A9B7C6">                </span><span style="color:#CC7832">new</span><span style="color:#A9B7C6"> InvokerTransformer(</span><span style="display:inline-block;position:relative;width:132px;height:31px;vertical-align:top"><span style="position:absolute;left:2px;top:2px;width:127px;height:26px;background:#3B3B3B;border-radius:4px;font-family:'Liberation Sans', sans-serif;font-size:16.5px;line-height:24px;color:#878787;text-align:center;letter-spacing:0.6px">methodName:</span></span><span style="color:#6A8759">&quot;exec&quot;</span><span style="color:#CC7832">,new</span><span style="color:#A9B7C6"> Class[]{String.</span><span style="color:#CC7832">class</span><span style="color:#A9B7C6">}</span><span style="color:#CC7832">,new</span><span style="color:#A9B7C6"> Object[]{</span><span style="color:#6A8759">&quot;calc.exe&quot;</span><span style="color:#A9B7C6">})</span><span style="color:#CC7832">,</span></div><div style="position:absolute;left:7px;top:65px;height:31px;font-family:'Liberation Mono', monospace;font-size:18.33px;line-height:31px;white-space:pre"><span style="color:#A9B7C6">        </span><span style="color:#A9B7C6">}</span><span style="color:#CC7832">;</span></div><div style="position:absolute;left:7px;top:96px;height:31px;font-family:'Liberation Mono', monospace;font-size:18.33px;line-height:31px;white-space:pre"><span style="color:#A9B7C6">        </span><span style="color:#A9B7C6">ChainedTransformer chainedTransformer=</span><span style="color:#CC7832">new</span><span style="color:#A9B7C6"> ChainedTransformer(transformers)</span><span style="color:#CC7832">;</span></div><div style="position:absolute;left:7px;top:127px;height:31px;font-family:'Liberation Mono', monospace;font-size:18.33px;line-height:31px;white-space:pre"><span style="color:#A9B7C6">        </span><span style="color:#A9B7C6">HashMap&lt;Object</span><span style="color:#CC7832">,</span><span style="color:#A9B7C6">Object&gt; hashMap=</span><span style="color:#CC7832">new</span><span style="color:#A9B7C6"> HashMap&lt;&gt;()</span><span style="color:#CC7832">;</span></div><div style="position:absolute;left:403px;top:157px;width:88px;height:31px;background:#52503A"></div><div style="position:absolute;left:491px;top:157px;width:88px;height:31px;background:#52503A"></div><div style="position:absolute;left:7px;top:158px;height:31px;font-family:'Liberation Mono', monospace;font-size:18.33px;line-height:31px;white-space:pre"><span style="color:#A9B7C6">        </span><span style="color:#A9B7C6">Map&lt;Object</span><span style="color:#CC7832">,</span><span style="color:#A9B7C6">Object&gt; lazyMap= </span><span style="color:#A9B7C6">LazyMap.</span><span style="color:#A9B7C6;font-style:italic">decorate</span><span style="color:#A9B7C6">(hashMap</span><span style="color:#CC7832">,</span><span style="color:#A9B7C6">chainedTransformer)</span><span style="color:#CC7832">;</span></div><div style="position:absolute;left:7px;top:189px;height:31px;font-family:'Liberation Mono', monospace;font-size:18.33px;line-height:31px;white-space:pre"><span style="color:#808080">//        Map&lt;Object,Object&gt; lazyMap= LazyMap.decorate(hashMap,new ConstantTransformer(1));</span></div><div style="position:absolute;left:7px;top:220px;height:31px;font-family:'Liberation Mono', monospace;font-size:18.33px;line-height:31px;white-space:pre"><span style="color:#A9B7C6">        </span><span style="color:#A9B7C6">TiedMapEntry tiedMapEntry=</span><span style="color:#CC7832">new</span><span style="color:#A9B7C6"> TiedMapEntry(lazyMap</span><span style="color:#CC7832">,</span><span style="display:inline-block;position:relative;width:46px;height:31px;vertical-align:top"><span style="position:absolute;left:2px;top:2px;width:41px;height:26px;background:#3B3B3B;border-radius:4px;font-family:'Liberation Sans', sans-serif;font-size:16.5px;line-height:24px;color:#878787;text-align:center;letter-spacing:0.6px">key:</span></span><span style="color:#6A8759">&quot;aaa&quot;</span><span style="color:#A9B7C6">)</span><span style="color:#CC7832">;</span></div><div style="position:absolute;left:95px;top:250px;width:77px;height:31px;background:#52503A"></div><div style="position:absolute;left:348px;top:250px;width:77px;height:31px;background:#52503A"></div><div style="position:absolute;left:7px;top:251px;height:31px;font-family:'Liberation Mono', monospace;font-size:18.33px;line-height:31px;white-space:pre"><span style="color:#A9B7C6">        </span><span style="color:#A9B7C6">HashMap</span><span style="color:#A9B7C6"> hashMap1 = </span><span style="color:#CC7832">new</span><span style="color:#A9B7C6"> </span><span style="color:#A9B7C6">HashMap</span><span style="color:#A9B7C6">()</span><span style="color:#CC7832">;</span></div><div style="position:absolute;left:95px;top:281px;width:132px;height:31px;background:#52503A"></div><div style="position:absolute;left:7px;top:282px;height:31px;font-family:'Liberation Mono', monospace;font-size:18.33px;line-height:31px;white-space:pre"><span style="color:#A9B7C6">        </span><span style="color:#A9B7C6">hashMap1.put</span><span style="color:#A9B7C6">(tiedMapEntry</span><span style="color:#CC7832">,</span><span style="color:#6A8759">&quot;bbb&quot;</span><span style="color:#A9B7C6">)</span><span style="color:#CC7832">;</span></div><div style="position:absolute;left:7px;top:313px;height:31px;font-family:'Liberation Mono', monospace;font-size:18.33px;line-height:31px;white-space:pre"><span style="color:#808080;text-decoration:underline wavy #BBB529;text-decoration-thickness:1px;text-underline-offset:3px">//</span><span style="color:#808080">        lazyMap.remove(&quot;aaa&quot;);</span></div><div style="position:absolute;left:7px;top:375px;height:31px;font-family:'Liberation Mono', monospace;font-size:18.33px;line-height:31px;white-space:pre"><span style="color:#808080">//        Class c=LazyMap.class;</span></div><div style="position:absolute;left:7px;top:406px;height:31px;font-family:'Liberation Mono', monospace;font-size:18.33px;line-height:31px;white-space:pre"><span style="color:#808080">//        Field factoryField = c.getDeclaredField(&quot;factory&quot;);</span></div><div style="position:absolute;left:7px;top:437px;height:31px;font-family:'Liberation Mono', monospace;font-size:18.33px;line-height:31px;white-space:pre"><span style="color:#808080">//        factoryField.setAccessible(true);</span></div><div style="position:absolute;left:7px;top:468px;height:31px;font-family:'Liberation Mono', monospace;font-size:18.33px;line-height:31px;white-space:pre"><span style="color:#808080">//        factoryField.set(lazyMap,chainedTransformer);</span></div><div style="position:absolute;left:7px;top:592px;height:31px;font-family:'Liberation Mono', monospace;font-size:18.33px;line-height:31px;white-space:pre"><span style="color:#A9B7C6">        </span><span style="color:#A9B7C6;font-style:italic">serialize</span><span style="color:#A9B7C6">(hashMap1)</span><span style="color:#CC7832">;</span></div><div style="position:absolute;left:7px;top:623px;height:31px;font-family:'Liberation Mono', monospace;font-size:18.33px;line-height:31px;white-space:pre"><span style="color:#808080">//        </span><span style="color:#808080;text-decoration:underline wavy #629755;text-decoration-thickness:1px;text-underline-offset:3px">unserialize</span><span style="color:#808080">(&quot;ser.bin&quot;);</span></div><div style="position:absolute;left:7px;top:654px;height:31px;font-family:'Liberation Mono', monospace;font-size:18.33px;line-height:31px;white-space:pre"><span style="color:#A9B7C6">    </span><span style="color:#A9B7C6">}</span></div><div style="position:absolute;left:7px;top:685px;height:31px;font-family:'Liberation Mono', monospace;font-size:18.33px;line-height:31px;white-space:pre"><span style="color:#A9B7C6">    </span><span style="color:#CC7832">public static void </span><span style="color:#FFC66D">serialize</span><span style="color:#A9B7C6">(Object obj) </span><span style="color:#CC7832">throws </span><span style="color:#A9B7C6">Exception{</span></div><div style="position:absolute;left:7px;top:716px;height:31px;font-family:'Liberation Mono', monospace;font-size:18.33px;line-height:31px;white-space:pre"><span style="color:#A9B7C6">        </span><span style="color:#A9B7C6">ObjectOutputStream oos=</span><span style="color:#CC7832">new</span><span style="color:#A9B7C6"> ObjectOutputStream(</span><span style="color:#CC7832">new</span><span style="color:#A9B7C6"> FileOutputStream(</span><span style="display:inline-block;position:relative;width:64px;height:31px;vertical-align:top"><span style="position:absolute;left:2px;top:2px;width:59px;height:26px;background:#3B3B3B;border-radius:4px;font-family:'Liberation Sans', sans-serif;font-size:16.5px;line-height:24px;color:#878787;text-align:center;letter-spacing:0.6px">name:</span></span><span style="color:#6A8759">&quot;ser.bin&quot;</span><span style="color:#A9B7C6">))</span><span style="color:#CC7832">;</span></div><div style="position:absolute;left:7px;top:747px;height:31px;font-family:'Liberation Mono', monospace;font-size:18.33px;line-height:31px;white-space:pre"><span style="color:#A9B7C6">        </span><span style="color:#A9B7C6">oos.writeObject(obj)</span><span style="color:#CC7832">;</span></div><div style="position:absolute;left:7px;top:778px;height:31px;font-family:'Liberation Mono', monospace;font-size:18.33px;line-height:31px;white-space:pre"><span style="color:#A9B7C6">    </span><span style="color:#A9B7C6">}</span></div><div style="position:absolute;left:7px;top:809px;height:31px;font-family:'Liberation Mono', monospace;font-size:18.33px;line-height:31px;white-space:pre"><span style="color:#A9B7C6">    </span><span style="color:#CC7832">public static </span><span style="color:#A9B7C6">Object </span><span style="color:#808080;text-decoration:underline wavy #629755;text-decoration-thickness:1px;text-underline-offset:3px">unserialize</span><span style="color:#A9B7C6">(String filename) </span><span style="color:#CC7832">throws </span><span style="color:#A9B7C6">Exception{</span></div><div style="position:absolute;left:7px;top:840px;height:31px;font-family:'Liberation Mono', monospace;font-size:18.33px;line-height:31px;white-space:pre"><span style="color:#A9B7C6">        </span><span style="color:#A9B7C6">ObjectInputStream ois=</span><span style="color:#CC7832">new</span><span style="color:#A9B7C6"> ObjectInputStream(</span><span style="color:#CC7832">new</span><span style="color:#A9B7C6"> FileInputStream(filename))</span><span style="color:#CC7832">;</span></div><div style="position:absolute;left:172px;top:870px;width:11px;height:31px;background:#52503A"></div><div style="position:absolute;left:7px;top:871px;height:31px;font-family:'Liberation Mono', monospace;font-size:18.33px;line-height:31px;white-space:pre"><span style="color:#A9B7C6">        </span><span style="color:#A9B7C6">Object </span><span style="color:#A9B7C6">o</span><span style="color:#A9B7C6"> = ois.readObject()</span><span style="color:#CC7832">;</span></div></div><div style="position:absolute;left:500px;top:88px;width:27px;text-align:right;font-family:'Liberation Mono', monospace;font-size:16.5px;line-height:31px;color:#606366">22</div><div style="position:absolute;left:500px;top:119px;width:27px;text-align:right;font-family:'Liberation Mono', monospace;font-size:16.5px;line-height:31px;color:#606366">23</div><div style="position:absolute;left:500px;top:150px;width:27px;text-align:right;font-family:'Liberation Mono', monospace;font-size:16.5px;line-height:31px;color:#606366">24</div><div style="position:absolute;left:500px;top:181px;width:27px;text-align:right;font-family:'Liberation Mono', monospace;font-size:16.5px;line-height:31px;color:#606366">25</div><div style="position:absolute;left:500px;top:212px;width:27px;text-align:right;font-family:'Liberation Mono', monospace;font-size:16.5px;line-height:31px;color:#606366">26</div><div style="position:absolute;left:500px;top:243px;width:27px;text-align:right;font-family:'Liberation Mono', monospace;font-size:16.5px;line-height:31px;color:#606366">27</div><div style="position:absolute;left:500px;top:274px;width:27px;text-align:right;font-family:'Liberation Mono', monospace;font-size:16.5px;line-height:31px;color:#606366">28</div><div style="position:absolute;left:500px;top:305px;width:27px;text-align:right;font-family:'Liberation Mono', monospace;font-size:16.5px;line-height:31px;color:#606366">29</div><div style="position:absolute;left:500px;top:336px;width:27px;text-align:right;font-family:'Liberation Mono', monospace;font-size:16.5px;line-height:31px;color:#606366">30</div><div style="position:absolute;left:500px;top:367px;width:27px;text-align:right;font-family:'Liberation Mono', monospace;font-size:16.5px;line-height:31px;color:#606366">31</div><div style="position:absolute;left:500px;top:398px;width:27px;text-align:right;font-family:'Liberation Mono', monospace;font-size:16.5px;line-height:31px;color:#606366">32</div><div style="position:absolute;left:500px;top:429px;width:27px;text-align:right;font-family:'Liberation Mono', monospace;font-size:16.5px;line-height:31px;color:#606366">33</div><div style="position:absolute;left:500px;top:460px;width:27px;text-align:right;font-family:'Liberation Mono', monospace;font-size:16.5px;line-height:31px;color:#606366">34</div><div style="position:absolute;left:500px;top:491px;width:27px;text-align:right;font-family:'Liberation Mono', monospace;font-size:16.5px;line-height:31px;color:#606366">35</div><div style="position:absolute;left:500px;top:522px;width:27px;text-align:right;font-family:'Liberation Mono', monospace;font-size:16.5px;line-height:31px;color:#606366">36</div><div style="position:absolute;left:500px;top:553px;width:27px;text-align:right;font-family:'Liberation Mono', monospace;font-size:16.5px;line-height:31px;color:#606366">37</div><div style="position:absolute;left:500px;top:584px;width:27px;text-align:right;font-family:'Liberation Mono', monospace;font-size:16.5px;line-height:31px;color:#606366">38</div><div style="position:absolute;left:500px;top:615px;width:27px;text-align:right;font-family:'Liberation Mono', monospace;font-size:16.5px;line-height:31px;color:#606366">39</div><div style="position:absolute;left:500px;top:646px;width:27px;text-align:right;font-family:'Liberation Mono', monospace;font-size:16.5px;line-height:31px;color:#606366">40</div><div style="position:absolute;left:500px;top:677px;width:27px;text-align:right;font-family:'Liberation Mono', monospace;font-size:16.5px;line-height:31px;color:#606366">41</div><div style="position:absolute;left:500px;top:708px;width:27px;text-align:right;font-family:'Liberation Mono', monospace;font-size:16.5px;line-height:31px;color:#606366">42</div><div style="position:absolute;left:500px;top:739px;width:27px;text-align:right;font-family:'Liberation Mono', monospace;font-size:16.5px;line-height:31px;color:#606366">43</div><div style="position:absolute;left:500px;top:770px;width:27px;text-align:right;font-family:'Liberation Mono', monospace;font-size:16.5px;line-height:31px;color:#606366">44</div><div style="position:absolute;left:500px;top:801px;width:27px;text-align:right;font-family:'Liberation Mono', monospace;font-size:16.5px;line-height:31px;color:#606366">45</div><div style="position:absolute;left:500px;top:832px;width:27px;text-align:right;font-family:'Liberation Mono', monospace;font-size:16.5px;line-height:31px;color:#606366">46</div><div style="position:absolute;left:500px;top:863px;width:27px;text-align:right;font-family:'Liberation Mono', monospace;font-size:16.5px;line-height:31px;color:#606366">47</div><div style="position:absolute;left:500px;top:894px;width:27px;text-align:right;font-family:'Liberation Mono', monospace;font-size:16.5px;line-height:31px;color:#606366">48</div><div style="position:absolute;left:500px;top:925px;width:27px;text-align:right;font-family:'Liberation Mono', monospace;font-size:16.5px;line-height:31px;color:#606366">49</div><div style="position:absolute;left:500px;top:956px;width:27px;text-align:right;font-family:'Liberation Mono', monospace;font-size:16.5px;line-height:31px;color:#606366">50</div><div style="position:absolute;left:644px;top:85px;width:1px;height:651px;background:#393939;"></div><div style="position:absolute;left:644px;top:800px;width:1px;height:60px;background:#393939;"></div><div style="position:absolute;left:644px;top:924px;width:1px;height:64px;background:#393939;"></div><div style="position:absolute;left:688px;top:85px;width:1px;height:65px;background:#393939;"></div><svg style="position:absolute;left:588px;top:406px" width="13" height="17"><path d="M0.5 0.5H11.5V10.5L6 16L0.5 10.5Z" fill="#313335" stroke="#6E7072"/><path d="M3.5 6H8.5" stroke="#8E9193"/></svg><svg style="position:absolute;left:588px;top:558px" width="13" height="17"><path d="M0.5 16.5H11.5V6.5L6 1L0.5 6.5Z" fill="#313335" stroke="#6E7072"/><path d="M3.5 11H8.5" stroke="#8E9193"/></svg><svg style="position:absolute;left:588px;top:744px" width="13" height="17"><path d="M0.5 16.5H11.5V6.5L6 1L0.5 6.5Z" fill="#313335" stroke="#6E7072"/><path d="M3.5 11H8.5" stroke="#8E9193"/></svg><svg style="position:absolute;left:588px;top:778px" width="13" height="17"><path d="M0.5 0.5H11.5V10.5L6 16L0.5 10.5Z" fill="#313335" stroke="#6E7072"/><path d="M3.5 6H8.5" stroke="#8E9193"/></svg><svg style="position:absolute;left:588px;top:868px" width="13" height="17"><path d="M0.5 16.5H11.5V6.5L6 1L0.5 6.5Z" fill="#313335" stroke="#6E7072"/><path d="M3.5 11H8.5" stroke="#8E9193"/></svg><svg style="position:absolute;left:588px;top:902px" width="13" height="17"><path d="M0.5 0.5H11.5V10.5L6 16L0.5 10.5Z" fill="#313335" stroke="#6E7072"/><path d="M3.5 6H8.5" stroke="#8E9193"/></svg><div style="position:absolute;left:603px;top:980px;width:1071px;height:8px;background:#4D4D4D;"></div><div style="position:absolute;left:1890px;top:416px;width:8px;height:421px;background:#4A4A4A;"></div><div style="position:absolute;left:1885px;top:270px;width:14px;height:2px;background:#C9A53A;"></div><div style="position:absolute;left:1885px;top:299px;width:14px;height:2px;background:#C9A53A;"></div><div style="position:absolute;left:1885px;top:372px;width:14px;height:2px;background:#8C8460;"></div><div style="position:absolute;left:1885px;top:488px;width:14px;height:2px;background:#C9A53A;"></div><div style="position:absolute;left:1885px;top:532px;width:14px;height:2px;background:#C9A53A;"></div><div style="position:absolute;left:1885px;top:546px;width:14px;height:2px;background:#C9A53A;"></div><div style="position:absolute;left:1885px;top:562px;width:14px;height:2px;background:#8C8460;"></div><div style="position:absolute;left:1885px;top:793px;width:14px;height:2px;background:#C9A53A;"></div><div style="position:absolute;left:1885px;top:823px;width:14px;height:2px;background:#C9A53A;"></div><div style="position:absolute;left:1763px;top:85px;width:136px;height:23px;background:#2B2B2B"></div><svg style="position:absolute;left:1768px;top:91px" width="14" height="13"><path d="M6.5 0L13 12H0Z" fill="#E0A81E"/><rect x="5.8" y="4" width="1.5" height="4" fill="#2B2B2B"/><rect x="5.8" y="9" width="1.5" height="1.5" fill="#2B2B2B"/></svg><div style="position:absolute;left:1784px;top:92px;font-size:13px;line-height:15px;color:#BBBBBB;white-space:pre;">8</div><svg style="position:absolute;left:1798px;top:91px" width="14" height="13"><path d="M6.5 0L13 12H0Z" fill="#8E8570"/><rect x="5.8" y="4" width="1.5" height="4" fill="#2B2B2B"/><rect x="5.8" y="9" width="1.5" height="1.5" fill="#2B2B2B"/></svg><div style="position:absolute;left:1814px;top:92px;font-size:13px;line-height:15px;color:#BBBBBB;white-space:pre;">2</div><svg style="position:absolute;left:1828px;top:92px" width="14" height="13"><path d="M1 5L5 9L12 1" stroke="#4DB050" stroke-width="2.5" fill="none"/><path d="M1 12L3 10L5 12L7 10L9 12L11 10" stroke="#4DB050" stroke-width="1" fill="none"/></svg><div style="position:absolute;left:1844px;top:92px;font-size:13px;line-height:15px;color:#BBBBBB;white-space:pre;">2</div><svg style="position:absolute;left:1861px;top:94px" width="11" height="7"><path d="M1 6L5.5 1.5L10 6" stroke="#AFB1B3" stroke-width="1.4" fill="none"/></svg><svg style="position:absolute;left:1882px;top:95px" width="11" height="7"><path d="M1 1L5.5 5.5L10 1" stroke="#AFB1B3" stroke-width="1.4" fill="none"/></svg><div style="position:absolute;left:0px;top:988px;width:1920px;height:23px;background:#3C3F41;"></div><div style="position:absolute;left:0px;top:988px;width:1920px;height:1px;background:#323232;"></div><div style="position:absolute;left:0px;top:1011px;width:1920px;height:1px;background:#4B4D4F;"></div><div style="position:absolute;left:0px;top:1012px;width:1920px;height:20px;background:#3C3F41;"></div><svg style="position:absolute;left:34px;top:994px" width="14" height="14"><path d="M3 2V12" stroke="#AFB1B3" stroke-width="2"/><path d="M3 11C3 7 9 8 9 3" stroke="#AFB1B3" stroke-width="2" fill="none"/><circle cx="9" cy="3" r="2" fill="#AFB1B3"/></svg><div style="position:absolute;left:50px;top:995px;font-size:12px;line-height:15px;color:#BBBBBB;white-space:pre;">Version Control</div><svg style="position:absolute;left:152px;top:994px" width="14" height="14"><circle cx="6" cy="6" r="4.3" fill="none" stroke="#AFB1B3" stroke-width="1.8"/><path d="M9 9L13 13" stroke="#AFB1B3" stroke-width="2"/></svg><div style="position:absolute;left:170px;top:995px;font-size:12px;line-height:15px;color:#BBBBBB;white-space:pre;">查找</div><svg style="position:absolute;left:211px;top:994px" width="14" height="14"><path d="M2 1L11 7L2 13Z" fill="#AFB1B3"/></svg><div style="position:absolute;left:227px;top:995px;font-size:12px;line-height:15px;color:#BBBBBB;white-space:pre;">运行</div><svg style="position:absolute;left:267px;top:994px" width="14" height="14"><ellipse cx="7" cy="8" rx="5" ry="5.5" fill="#AFB1B3"/><path d="M1 7H13M1 10H13M4 2L3 0M10 2L11 0" stroke="#AFB1B3" stroke-width="1.2"/></svg><div style="position:absolute;left:284px;top:995px;font-size:12px;line-height:15px;color:#BBBBBB;white-space:pre;">调试</div><svg style="position:absolute;left:325px;top:995px" width="14" height="14"><path d="M1 2H3M5 2H12M1 6H3M5 6H12M1 10H3M5 10H12" stroke="#AFB1B3" stroke-width="2"/></svg><div style="position:absolute;left:341px;top:995px;font-size:12px;line-height:15px;color:#BBBBBB;white-space:pre;">TODO</div><svg style="position:absolute;left:393px;top:994px" width="14" height="14"><circle cx="7" cy="7" r="6" fill="#AFB1B3"/><rect x="6" y="3" width="2" height="5" fill="#3C3F41"/><rect x="6" y="9" width="2" height="2" fill="#3C3F41"/></svg><div style="position:absolute;left:410px;top:995px;font-size:12px;line-height:15px;color:#BBBBBB;white-space:pre;">问题</div><svg style="position:absolute;left:449px;top:993px" width="15" height="15"><circle cx="6" cy="6" r="5" fill="none" stroke="#AFB1B3" stroke-width="1.5"/><path d="M6 3V6L8 8" stroke="#AFB1B3" stroke-width="1.2" fill="none"/><path d="M7 7L13 10L7 14Z" fill="#AFB1B3"/></svg><div style="position:absolute;left:467px;top:995px;font-size:12px;line-height:15px;color:#BBBBBB;white-space:pre;">Profiler</div><svg style="position:absolute;left:525px;top:994px" width="14" height="14"><rect x="0" y="1" width="12" height="11" fill="#AFB1B3"/><path d="M2 4L5 6L2 8" stroke="#3C3F41" stroke-width="1.2" fill="none"/><path d="M6 9H10" stroke="#3C3F41" stroke-width="1.2"/></svg><div style="position:absolute;left:541px;top:995px;font-size:12px;line-height:15px;color:#BBBBBB;white-space:pre;">终端</div><svg style="position:absolute;left:581px;top:994px" width="14" height="14"><path d="M1 4L5 1L7 2L6 4L12 11L11 13L4 6L2 6Z" fill="#AFB1B3"/></svg><div style="position:absolute;left:598px;top:995px;font-size:12px;line-height:15px;color:#BBBBBB;white-space:pre;">构建</div><svg style="position:absolute;left:1827px;top:994px" width="14" height="14"><path d="M7 1C10.5 1 13 3.5 13 7V13H7C3.5 13 1 10.5 1 7C1 3.5 3.5 1 7 1Z" fill="none" stroke="#AFB1B3" stroke-width="1.5"/></svg><div style="position:absolute;left:1845px;top:995px;font-size:12px;line-height:15px;color:#BBBBBB;white-space:pre;">事件日志</div><svg style="position:absolute;left:6px;top:1015px" width="14" height="14"><rect x="3.5" y="0.5" width="10" height="10" fill="none" stroke="#AFB1B3"/><path d="M1 3V13H11" stroke="#AFB1B3" fill="none"/></svg><div style="position:absolute;left:27px;top:1015px;font-size:12px;line-height:15px;color:#BBBBBB;white-space:pre;">构建在 1秒655毫秒 中成功完成 (片刻 之前)</div><svg style="position:absolute;left:1683px;top:1014px" width="17" height="17"><path d="M3 11C0 11 0 6 3 6C3 2 10 1 11 5C14 5 15 10 12 11Z" fill="#AFB1B3"/><circle cx="12" cy="13" r="3" fill="#3C3F41" stroke="#AFB1B3" stroke-width="1.5"/></svg><div style="position:absolute;left:1710px;top:1015px;font-size:12px;line-height:15px;color:#BBBBBB;white-space:pre;">30:42</div><div style="position:absolute;left:1752px;top:1015px;font-size:12px;line-height:15px;color:#BBBBBB;white-space:pre;">CRLF</div><div style="position:absolute;left:1792px;top:1015px;font-size:12px;line-height:15px;color:#BBBBBB;white-space:pre;">UTF-8</div><div style="position:absolute;left:1838px;top:1015px;font-size:12px;line-height:15px;color:#BBBBBB;white-space:pre;">4 个空格</div><svg style="position:absolute;left:1895px;top:1015px" width="15" height="15"><rect x="4" y="7" width="9" height="7" fill="#AFB1B3"/><path d="M2 7V4C2 1 6 1 6 4" stroke="#AFB1B3" stroke-width="1.5" fill="none"/></svg><div style="position:absolute;left:153px;top:126px;width:402px;height:786px;background:#F1F2F6;border-radius:8px;box-shadow:0 0 0 1px rgba(255,255,255,0.35),0 8px 28px rgba(0,0,0,0.45)"></div><svg style="position:absolute;left:173px;top:134px" width="12" height="16"><rect x="0.5" y="0.5" width="11" height="15" rx="1.5" fill="#6C7B8A"/><rect x="1.5" y="1.5" width="9" height="3" fill="#5FD0F5"/><rect x="1.5" y="6" width="2.5" height="2" fill="#E0E4E8"/><rect x="5" y="6" width="2.5" height="2" fill="#E0E4E8"/><rect x="8" y="6" width="2.5" height="2" fill="#E0E4E8"/><rect x="1.5" y="9" width="2.5" height="2" fill="#E0E4E8"/><rect x="5" y="9" width="2.5" height="2" fill="#E0E4E8"/><rect x="1.5" y="12" width="2.5" height="2" fill="#E0E4E8"/><rect x="5" y="12" width="2.5" height="2" fill="#E0E4E8"/><rect x="8" y="9" width="2.5" height="5" fill="#1F4E9A"/></svg><div style="position:absolute;left:201px;top:135px;font-size:12px;line-height:14px;color:#1A1A1A;white-space:pre;">计算器</div><div style="position:absolute;left:434px;top:141px;width:11px;height:1px;background:#1A1A1A;"></div><div style="position:absolute;left:481px;top:136px;width:9px;height:9px;border:1px solid #1A1A1A;border-radius:1px"></div><svg style="position:absolute;left:526px;top:136px" width="12" height="12"><path d="M0.5 0.5L11 11M11 0.5L0.5 11" stroke="#1A1A1A" stroke-width="1.1"/></svg><svg style="position:absolute;left:169px;top:175px" width="16" height="13"><path d="M0 1.5H15M0 6.5H15M0 11.5H15" stroke="#1A1A1A" stroke-width="1.2"/></svg><div style="position:absolute;left:200px;top:170px;font-size:20.5px;line-height:24px;color:#1A1A1A;white-space:pre;font-weight:500">标准</div><svg style="position:absolute;left:260px;top:174px" width="16" height="16"><path d="M4 7V1H14V14H7" stroke="#1A1A1A" stroke-width="1.2" fill="none"/><path d="M8 1V8H14" stroke="#1A1A1A" stroke-width="1.2" fill="none"/><path d="M1.5 14L6 9.5M2 9.5H6V13.5" stroke="#1A1A1A" stroke-width="1.2" fill="none"/></svg><svg style="position:absolute;left:521px;top:172px" width="19" height="19"><path d="M3.5 6.5A7 7 0 1 1 3 11" stroke="#1A1A1A" stroke-width="1.2" fill="none"/><path d="M3 2.5V7H7.5" stroke="#1A1A1A" stroke-width="1.2" fill="none"/><path d="M9.5 5.5V10H13" stroke="#1A1A1A" stroke-width="1.2" fill="none"/></svg><div style="position:absolute;left:300px;top:248px;width:243px;text-align:right;font-family:'Liberation Sans', sans-serif;font-size:47px;line-height:56px;font-weight:bold;color:#1A1A1A">0</div><div style="position:absolute;left:158.5px;top:377px;width:60px;text-align:center;font-family:'Liberation Sans', sans-serif;font-size:13px;line-height:16px;color:#9A9A9A">MC</div><div style="position:absolute;left:224px;top:377px;width:60px;text-align:center;font-family:'Liberation Sans', sans-serif;font-size:13px;line-height:16px;color:#9A9A9A">MR</div><div style="position:absolute;left:290px;top:377px;width:60px;text-align:center;font-family:'Liberation Sans', sans-serif;font-size:13px;line-height:16px;color:#1A1A1A">M+</div><div style="position:absolute;left:356px;top:377px;width:60px;text-align:center;font-family:'Liberation Sans', sans-serif;font-size:13px;line-height:16px;color:#1A1A1A">M&#8722;</div><div style="position:absolute;left:422px;top:377px;width:60px;text-align:center;font-family:'Liberation Sans', sans-serif;font-size:13px;line-height:16px;color:#1A1A1A">MS</div><div style="position:absolute;left:489px;top:377px;width:60px;text-align:center;font-family:'Liberation Sans', sans-serif;font-size:13px;line-height:16px;color:#9A9A9A">M<svg width="9" height="6" style="vertical-align:1px;margin-left:1px"><path d="M1 1L4.5 4.5L8 1" stroke="#9A9A9A" stroke-width="1" fill="none"/></svg></div><div style="position:absolute;left:158px;top:413px;width:96px;height:80px;box-sizing:border-box;background:#F8F8FB;border:1px solid #E6E6EA;border-bottom-color:#D6D6DB;border-radius:4px"></div><div style="position:absolute;left:176px;top:441px;width:60px;text-align:center;font-family:'Liberation Sans', sans-serif;font-size:15px;line-height:24px;color:#1A1A1A">%</div><div style="position:absolute;left:257px;top:413px;width:96px;height:80px;box-sizing:border-box;background:#F8F8FB;border:1px solid #E6E6EA;border-bottom-color:#D6D6DB;border-radius:4px"></div><div style="position:absolute;left:275px;top:441px;width:60px;text-align:center;font-family:'Liberation Sans', sans-serif;font-size:15px;line-height:24px;color:#1A1A1A">CE</div><div style="position:absolute;left:356px;top:413px;width:96px;height:80px;box-sizing:border-box;background:#F8F8FB;border:1px solid #E6E6EA;border-bottom-color:#D6D6DB;border-radius:4px"></div><div style="position:absolute;left:374px;top:441px;width:60px;text-align:center;font-family:'Liberation Sans', sans-serif;font-size:15px;line-height:24px;color:#1A1A1A">C</div><div style="position:absolute;left:455px;top:413px;width:96px;height:80px;box-sizing:border-box;background:#F8F8FB;border:1px solid #E6E6EA;border-bottom-color:#D6D6DB;border-radius:4px"></div><svg style="position:absolute;left:495px;top:447px" width="16" height="12"><path d="M4.5 0.5H15.5V11.5H4.5L0.7 6Z" fill="none" stroke="#1A1A1A" stroke-width="1.1"/><path d="M7.5 3.5L12.5 8.5M12.5 3.5L7.5 8.5" stroke="#1A1A1A" stroke-width="1.1"/></svg><div style="position:absolute;left:158px;top:496px;width:96px;height:80px;box-sizing:border-box;background:#F8F8FB;border:1px solid #E6E6EA;border-bottom-color:#D6D6DB;border-radius:4px"></div><div style="position:absolute;left:192px;top:525px;width:28px;text-align:center;font-family:'Liberation Serif', serif;font-size:17px;line-height:22px;color:#1A1A1A"><sup style="font-size:10px;vertical-align:6px">1</sup>&#8260;<i>x</i></div><div style="position:absolute;left:257px;top:496px;width:96px;height:80px;box-sizing:border-box;background:#F8F8FB;border:1px solid #E6E6EA;border-bottom-color:#D6D6DB;border-radius:4px"></div><div style="position:absolute;left:291px;top:525px;width:28px;text-align:center;font-family:'Liberation Serif', serif;font-size:17px;line-height:22px;color:#1A1A1A"><i>x</i><sup style="font-size:10px;vertical-align:7px"> 2</sup></div><div style="position:absolute;left:356px;top:496px;width:96px;height:80px;box-sizing:border-box;background:#F8F8FB;border:1px solid #E6E6EA;border-bottom-color:#D6D6DB;border-radius:4px"></div><div style="position:absolute;left:388px;top:525px;width:32px;text-align:center;font-family:'Liberation Serif', serif;font-size:17px;line-height:22px;color:#1A1A1A"><sup style="font-size:10px;vertical-align:7px">2</sup>&#8730;<i style="text-decoration:overline">x</i></div><div style="position:absolute;left:455px;top:496px;width:96px;height:80px;box-sizing:border-box;background:#F8F8FB;border:1px solid #E6E6EA;border-bottom-color:#D6D6DB;border-radius:4px"></div><svg style="position:absolute;left:496px;top:529px" width="14" height="14"><path d="M0.5 7H13.5" stroke="#1A1A1A" stroke-width="1.1"/><circle cx="7" cy="2.8" r="1" fill="#1A1A1A"/><circle cx="7" cy="11.2" r="1" fill="#1A1A1A"/></svg><div style="position:absolute;left:158px;top:579px;width:96px;height:80px;box-sizing:border-box;background:#FFFFFF;border:1px solid #E6E6EA;border-bottom-color:#D6D6DB;border-radius:4px"></div><div style="position:absolute;left:176px;top:607px;width:60px;text-align:center;font-family:'Liberation Sans', sans-serif;font-size:17px;line-height:24px;color:#1A1A1A">7</div><div style="position:absolute;left:257px;top:579px;width:96px;height:80px;box-sizing:border-box;background:#FFFFFF;border:1px solid #E6E6EA;border-bottom-color:#D6D6DB;border-radius:4px"></div><div style="position:absolute;left:275px;top:607px;width:60px;text-align:center;font-family:'Liberation Sans', sans-serif;font-size:17px;line-height:24px;color:#1A1A1A">8</div><div style="position:absolute;left:356px;top:579px;width:96px;height:80px;box-sizing:border-box;background:#FFFFFF;border:1px solid #E6E6EA;border-bottom-color:#D6D6DB;border-radius:4px"></div><div style="position:absolute;left:374px;top:607px;width:60px;text-align:center;font-family:'Liberation Sans', sans-serif;font-size:17px;line-height:24px;color:#1A1A1A">9</div><div style="position:absolute;left:455px;top:579px;width:96px;height:80px;box-sizing:border-box;background:#F8F8FB;border:1px solid #E6E6EA;border-bottom-color:#D6D6DB;border-radius:4px"></div><svg style="position:absolute;left:497px;top:612px" width="12" height="12"><path d="M1 1L11 11M11 1L1 11" stroke="#1A1A1A" stroke-width="1.1"/></svg><div style="position:absolute;left:158px;top:663px;width:96px;height:80px;box-sizing:border-box;background:#FFFFFF;border:1px solid #E6E6EA;border-bottom-color:#D6D6DB;border-radius:4px"></div><div style="position:absolute;left:176px;top:691px;width:60px;text-align:center;font-family:'Liberation Sans', sans-serif;font-size:17px;line-height:24px;color:#1A1A1A">4</div><div style="position:absolute;left:257px;top:663px;width:96px;height:80px;box-sizing:border-box;background:#FFFFFF;border:1px solid #E6E6EA;border-bottom-color:#D6D6DB;border-radius:4px"></div><div style="position:absolute;left:275px;top:691px;width:60px;text-align:center;font-family:'Liberation Sans', sans-serif;font-size:17px;line-height:24px;color:#1A1A1A">5</div><div style="position:absolute;left:356px;top:663px;width:96px;height:80px;box-sizing:border-box;background:#FFFFFF;border:1px solid #E6E6EA;border-bottom-color:#D6D6DB;border-radius:4px"></div><div style="position:absolute;left:374px;top:691px;width:60px;text-align:center;font-family:'Liberation Sans', sans-serif;font-size:17px;line-height:24px;color:#1A1A1A">6</div><div style="position:absolute;left:455px;top:663px;width:96px;height:80px;box-sizing:border-box;background:#F8F8FB;border:1px solid #E6E6EA;border-bottom-color:#D6D6DB;border-radius:4px"></div><svg style="position:absolute;left:497px;top:697px" width="12" height="12"><path d="M0.5 4.5H11.5" stroke="#1A1A1A" stroke-width="1.1"/></svg><div style="position:absolute;left:158px;top:746px;width:96px;height:80px;box-sizing:border-box;background:#FFFFFF;border:1px solid #E6E6EA;border-bottom-color:#D6D6DB;border-radius:4px"></div><div style="position:absolute;left:176px;top:774px;width:60px;text-align:center;font-family:'Liberation Sans', sans-serif;font-size:17px;line-height:24px;color:#1A1A1A">1</div><div style="position:absolute;left:257px;top:746px;width:96px;height:80px;box-sizing:border-box;background:#FFFFFF;border:1px solid #E6E6EA;border-bottom-color:#D6D6DB;border-radius:4px"></div><div style="position:absolute;left:275px;top:774px;width:60px;text-align:center;font-family:'Liberation Sans', sans-serif;font-size:17px;line-height:24px;color:#1A1A1A">2</div><div style="position:absolute;left:356px;top:746px;width:96px;height:80px;box-sizing:border-box;background:#FFFFFF;border:1px solid #E6E6EA;border-bottom-color:#D6D6DB;border-radius:4px"></div><div style="position:absolute;left:374px;top:774px;width:60px;text-align:center;font-family:'Liberation Sans', sans-serif;font-size:17px;line-height:24px;color:#1A1A1A">3</div><div style="position:absolute;left:455px;top:746px;width:96px;height:80px;box-sizing:border-box;background:#F8F8FB;border:1px solid #E6E6EA;border-bottom-color:#D6D6DB;border-radius:4px"></div><svg style="position:absolute;left:497px;top:779px" width="12" height="12"><path d="M0.5 6H11.5M6 0.5V11.5" stroke="#1A1A1A" stroke-width="1.1"/></svg><div style="position:absolute;left:158px;top:829px;width:96px;height:80px;box-sizing:border-box;background:#FFFFFF;border:1px solid #E6E6EA;border-bottom-color:#D6D6DB;border-radius:4px"></div><div style="position:absolute;left:192px;top:858px;width:28px;text-align:center;font-family:'Liberation Sans', sans-serif;font-size:15px;line-height:22px;color:#1A1A1A"><sup style="font-size:10px;vertical-align:5px">+</sup>/&#8211;</div><div style="position:absolute;left:257px;top:829px;width:96px;height:80px;box-sizing:border-box;background:#FFFFFF;border:1px solid #E6E6EA;border-bottom-color:#D6D6DB;border-radius:4px"></div><div style="position:absolute;left:275px;top:857px;width:60px;text-align:center;font-family:'Liberation Sans', sans-serif;font-size:17px;line-height:24px;color:#1A1A1A">0</div><div style="position:absolute;left:356px;top:829px;width:96px;height:80px;box-sizing:border-box;background:#FFFFFF;border:1px solid #E6E6EA;border-bottom-color:#D6D6DB;border-radius:4px"></div><div style="position:absolute;left:374px;top:857px;width:60px;text-align:center;font-family:'Liberation Sans', sans-serif;font-size:17px;line-height:24px;color:#1A1A1A">.</div><div style="position:absolute;left:455px;top:829px;width:96px;height:80px;box-sizing:border-box;background:#4C5C6B;border:none;border-radius:4px"></div><div style="position:absolute;left:493px;top:861px;width:20px;height:16px"><div style="position:absolute;left:3px;top:3px;width:14px;height:2px;background:#fff"></div><div style="position:absolute;left:3px;top:9px;width:14px;height:2px;background:#fff"></div></div>
</body></html>
